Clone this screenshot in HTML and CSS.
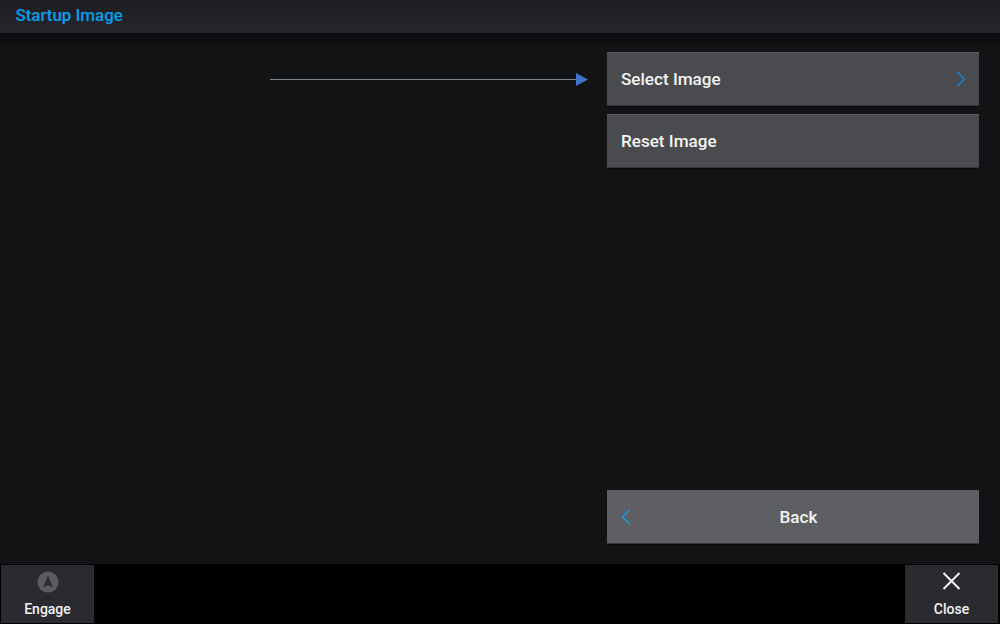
FILE: index.html
```html
<!DOCTYPE html>
<html lang="en">
<head>
<meta charset="utf-8">
<title>Startup Image</title>
<link rel="stylesheet" href="styles.css">
</head>
<body>
<div class="app">
  <header class="header"><h1 class="title">Startup Image</h1></header>
  <main class="main">
    <svg class="pointer" width="320" height="14" viewBox="0 0 320 14" aria-hidden="true">
      <line x1="0" y1="7.500" x2="307" y2="7.500" stroke="#7d8590" stroke-width="1"/>
      <polygon points="306,1 318,7.500 306,14" fill="#3f74c6"/>
    </svg>
    <div class="panel">
      <div class="menu">
        <button class="btn btn-menu">
          <span>Select Image</span>
          <svg class="chev" width="10" height="16" viewBox="0 0 10 16"><path d="M1 .8 8.500 8 1 15.200" fill="none" stroke="#1b84d4" stroke-width="1.500"/></svg>
        </button>
        <button class="btn btn-menu"><span>Reset Image</span></button>
      </div>
      <button class="btn btn-back">
        <svg class="chev" width="10" height="16" viewBox="0 0 10 16"><path d="M9 .8 1.500 8 9 15.200" fill="none" stroke="#0f9bec" stroke-width="1.500"/></svg>
        <span class="back-label">Back</span>
      </button>
    </div>
  </main>
  <footer class="footer">
    <button class="foot-btn foot-engage">
      <svg width="22" height="22" viewBox="0 0 22 22"><circle cx="11" cy="11" r="10.500" fill="#5a5b5e"/><path d="M11 4.500 16 16.500 11 14 6 16.500Z" fill="#2b2c31"/></svg>
      <span>Engage</span>
    </button>
    <button class="foot-btn foot-close">
      <svg width="20" height="20" viewBox="0 0 20 20"><path d="M1.500 2 17.500 18M17.500 2 1.500 18" stroke="#f2f2f2" stroke-width="2" fill="none"/></svg>
      <span>Close</span>
    </button>
  </footer>
</div>
</body>
</html>
```
FILE: styles.css
```css
* { box-sizing: border-box; }
html, body { margin: 0; padding: 0; }
body { background: #000; font-family: Roboto, "Liberation Sans", sans-serif; }
.app { width: 1000px; height: 624px; display: flex; flex-direction: column; overflow: hidden; }
.header {
  height: 33px;
  flex: none;
  background: linear-gradient(#1c1d21, #25272c);
  display: flex;
  align-items: center;
  padding-left: 15.500px;
}
.title { margin: 0; font-size: 16.900px; font-weight: 500; color: #05a0f0; line-height: 33px; position: relative; top: -1px; }
.main {
  position: relative;
  flex: 1;
  background: linear-gradient(#0b0c0e, #121315 14px);
  display: flex;
  justify-content: flex-end;
  padding: 19px 21px 20px 0;
}
.pointer { position: absolute; left: 270px; top: 39px; }
.panel { width: 372px; display: flex; flex-direction: column; justify-content: space-between; }
.menu { display: flex; flex-direction: column; gap: 8px; }
.btn {
  width: 100%;
  height: 54px;
  border: 0;
  border-top: 1px solid #5c5d61;
  border-bottom: 1px solid #36373a;
  box-shadow: 0 1px 0 #08090a;
  color: #f4f4f4;
  font: 500 17.100px Roboto, "Liberation Sans", sans-serif;
  display: flex;
  align-items: center;
  padding: 0 13px 0 14px;
}
.btn-menu { background: #4a4b4f; justify-content: space-between; }
.btn-back { background: #5e5f63; position: relative; }
.back-label { flex: 1; text-align: center; }
.chev { flex: none; }
.footer {
  height: 60px;
  flex: none;
  background: #000;
  display: flex;
  justify-content: space-between;
  padding: 1px 2px 1px 1px;
}
.foot-btn {
  width: 93px;
  height: 58px;
  border: 0;
  background: #2a2b30;
  color: #f2f2f2;
  font: 500 14px Roboto, "Liberation Sans", sans-serif;
  display: flex;
  flex-direction: column;
  align-items: center;
  padding: 0;
}
.foot-engage { padding-top: 6px; gap: 8px; }
.foot-close { padding-top: 6px; gap: 10px; }
```
